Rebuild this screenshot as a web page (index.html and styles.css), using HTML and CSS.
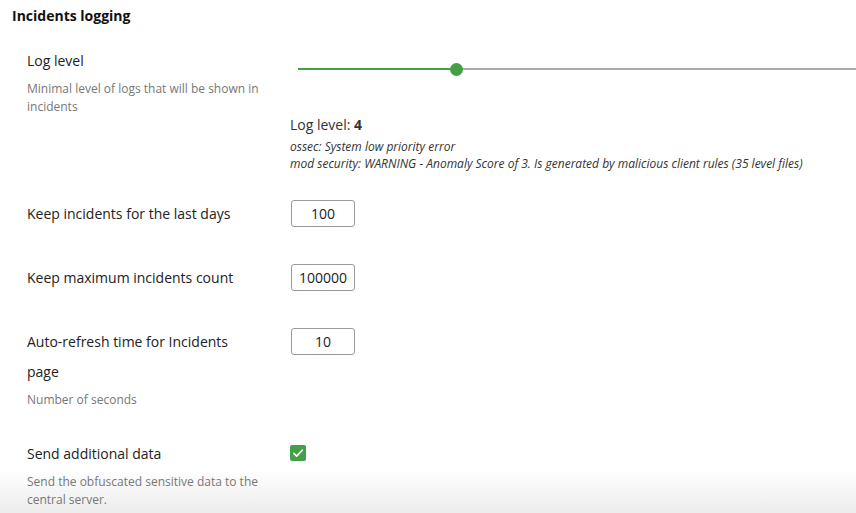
FILE: index.html
```html
<!DOCTYPE html>
<html>
<head>
<meta charset="utf-8">
<link rel="stylesheet" href="styles.css">
</head>
<body>
<div class="page">
  <h2 class="title">Incidents logging</h2>

  <div class="row row-first">
    <div class="left">
      <div class="label">Log level</div>
      <div class="desc">Minimal level of logs that will be shown in incidents</div>
    </div>
    <div class="right">
      <div class="slider">
        <div class="track-on" style="width:158px"></div>
        <div class="thumb"></div>
        <div class="track-off"></div>
      </div>
      <div class="level">Log level: <b>4</b></div>
      <div class="notes">
        <div class="note">ossec: System low priority error</div>
        <div class="note">mod security: WARNING - Anomaly Score of 3. Is generated by malicious client rules (35 level files)</div>
      </div>
    </div>
  </div>

  <div class="row">
    <div class="left">
      <div class="label">Keep incidents for the last days</div>
    </div>
    <div class="right">
      <input class="num" type="text" value="100">
    </div>
  </div>

  <div class="row">
    <div class="left">
      <div class="label">Keep maximum incidents count</div>
    </div>
    <div class="right">
      <input class="num" type="text" value="100000">
    </div>
  </div>

  <div class="row">
    <div class="left">
      <div class="label">Auto-refresh time for Incidents page</div>
      <div class="desc">Number of seconds</div>
    </div>
    <div class="right">
      <input class="num" type="text" value="10">
    </div>
  </div>

  <div class="row row-last">
    <div class="left">
      <div class="label">Send additional data</div>
      <div class="desc">Send the obfuscated sensitive data to the central server.</div>
    </div>
    <div class="right">
      <span class="check">
        <svg width="16" height="16" viewBox="0 0 16 16"><path d="M3.8 8.3 L6.7 11.1 L12.3 5.2" fill="none" stroke="#fff" stroke-width="1.6" stroke-linecap="round" stroke-linejoin="round"/></svg>
      </span>
    </div>
  </div>
</div>
</body>
</html>
```

FILE: styles.css
```css
html {
  height: 100%;
  background: linear-gradient(to bottom, #fff calc(100% - 44px), #ececec 100%);
}
html, body {
  margin: 0;
  padding: 0;
}
body {
  height: 100%;
  font-family: "Open Sans", "Liberation Sans", sans-serif;
  color: #222;
  overflow: hidden;
}
.page {
  width: 856px;
}
.title {
  margin: 0;
  padding: 0 12px;
  font-size: 14px;
  font-weight: 700;
  line-height: 32px;
  color: #111;
}
.row {
  display: flex;
  padding-bottom: 30px;
}
.row-first {
  margin-top: 14px;
  padding-bottom: 27px;
}
.row-last {
  padding-bottom: 0;
}
.left {
  width: 234px;
  padding-left: 27px;
  flex: none;
}
.right {
  margin-left: 29px;
  flex: 1;
  min-width: 0;
}
.label {
  font-size: 14px;
  line-height: 30px;
  color: #222;
  margin-bottom: 4px;
}
.desc {
  font-size: 12px;
  line-height: 18px;
  color: #777;
}
.slider {
  position: relative;
  height: 46px;
  margin-left: 8px;
  display: flex;
  align-items: center;
}
.track-on {
  height: 2px;
  background: #43a047;
  flex: none;
}
.track-off {
  height: 2px;
  background: #aaa;
  flex: 1;
}
.thumb {
  width: 13px;
  height: 13px;
  border-radius: 50%;
  background: #43a047;
  margin-left: -6px;
  margin-right: -7px;
  position: relative;
  z-index: 1;
  flex: none;
}
.level {
  margin-top: 23px;
  font-size: 14px;
  line-height: 20px;
  color: #333;
}
.level b {
  font-weight: 700;
}
.notes {
  margin-top: 3px;
}
.note {
  font-size: 12px;
  line-height: 17px;
  font-style: italic;
  color: #333;
  white-space: nowrap;
}
.num {
  display: block;
  box-sizing: border-box;
  width: 64px;
  height: 27px;
  margin: 1px 0 0 1px;
  border: 1px solid #9a9a9a;
  border-radius: 3px;
  padding: 0 2px;
  font-family: "Open Sans", "Liberation Sans", sans-serif;
  font-size: 14px;
  color: #222;
  text-align: center;
  background: #fff;
  outline: none;
}
.check {
  display: block;
  width: 16px;
  height: 16px;
  margin-top: 6px;
  background: #43a047;
  border-radius: 2px;
}
.check svg {
  display: block;
}
```
